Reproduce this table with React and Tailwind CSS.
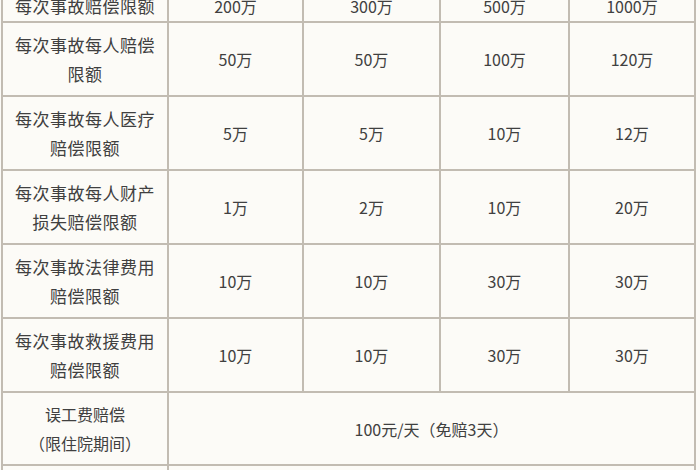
const rows = [
  { label: ['每次事故每人赔偿', '限额'], values: ['50万', '50万', '100万', '120万'] },
  { label: ['每次事故每人医疗', '赔偿限额'], values: ['5万', '5万', '10万', '12万'] },
  { label: ['每次事故每人财产', '损失赔偿限额'], values: ['1万', '2万', '10万', '20万'] },
  { label: ['每次事故法律费用', '赔偿限额'], values: ['10万', '10万', '30万', '30万'] },
  { label: ['每次事故救援费用', '赔偿限额'], values: ['10万', '10万', '30万', '30万'] },
];

const cell = 'border-2 border-[#c2bcb2] text-center align-middle';

export default function App() {
  return (
    <div
      className="h-[470px] w-[700px] overflow-hidden bg-[#fcfbf7] text-[#404040]"
      style={{ fontFamily: '"Noto Sans CJK SC", "Noto Sans", sans-serif' }}
    >
      <table className="-mt-[12px] ml-[1px] table-fixed border-collapse">
        <colgroup>
          <col className="w-[166px]" />
          <col className="w-[135px]" />
          <col className="w-[137px]" />
          <col className="w-[129px]" />
          <col className="w-[126px]" />
        </colgroup>
        <tbody>
          <tr className="h-[33px]">
            <td className={`${cell} text-[17px] tracking-[0.5px]`}>每次事故赔偿限额</td>
            {['200万', '300万', '500万', '1000万'].map((v) => (
              <td key={v} className={`${cell} text-[16px]`}>
                {v}
              </td>
            ))}
          </tr>
          {rows.map((row, i) => (
            <tr key={i} className="h-[74px]">
              <td className={`${cell} text-[17px] leading-[29px] tracking-[0.5px]`}>
                {row.label.map((l) => (
                  <div key={l}>{l}</div>
                ))}
              </td>
              {row.values.map((v, j) => (
                <td key={j} className={`${cell} text-[16px]`}>
                  {v}
                </td>
              ))}
            </tr>
          ))}
          <tr className="h-[73px]">
            <td className={`${cell} text-[16px] leading-[29px]`}>
              <div>误工费赔偿</div>
              <div>（限住院期间）</div>
            </td>
            <td colSpan={4} className={`${cell} text-[16px]`}>
              100元/天（免赔3天）
            </td>
          </tr>
          <tr className="h-[74px]">
            <td className={`${cell} text-[16px] leading-[29px]`}>
              <div>&nbsp;</div>
            </td>
            <td colSpan={4} className={`${cell} text-[16px]`}>
              &nbsp;
            </td>
          </tr>
        </tbody>
      </table>
    </div>
  );
}
